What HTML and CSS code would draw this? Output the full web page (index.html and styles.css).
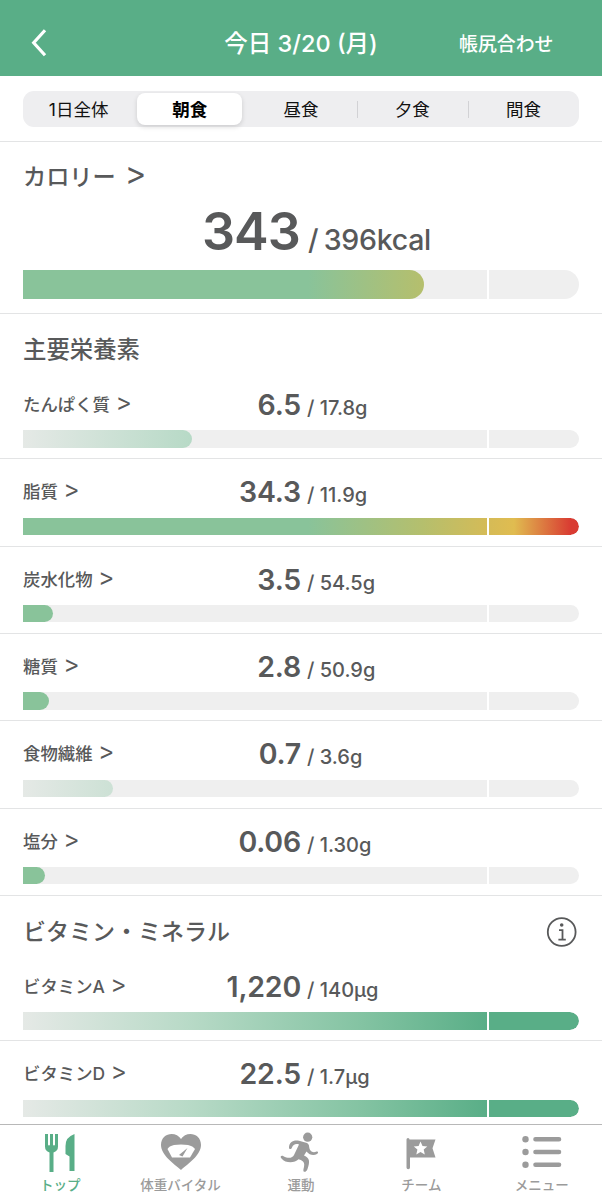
FILE: index.html
```
<!DOCTYPE html>
<html lang="ja">
<head>
<meta charset="utf-8">
<title>今日 3/20 (月)</title>
<link rel="stylesheet" href="styles.css">
</head>
<body>
<div class="app">
  <header class="header">
    <svg class="back" width="18" height="30" viewBox="0 0 18 30"><path d="M15 2.300 3.700 14.800 15 27.300" fill="none" stroke="#fff" stroke-width="3.200"/></svg>
    <h1 class="title">今日 3/20 (月)</h1>
    <span class="adjust">帳尻合わせ</span>
  </header>
  <div class="segment-wrap">
    <nav class="segments">
      <span class="segment">1日全体</span>
      <span class="segment active">朝食</span>
      <span class="segment">昼食</span>
      <span class="segment divided">夕食</span>
      <span class="segment divided">間食</span>
    </nav>
  </div>
  <main class="content">
    <section class="calories">
      <h2 class="calories-label">カロリー <span class="gt">&gt;</span></h2>
      <div class="calories-value"><span class="total">343</span><span class="goal">/ 396kcal</span></div>
      <div class="bar large"><div class="fill heat" style="width:401px"></div><i class="tick"></i></div>
    </section>
    <section>
      <h2 class="heading">主要栄養素</h2>
      <div class="row"><div class="info"><span class="label">たんぱく質 <span class="gt">&gt;</span></span><b class="num">6.5</b><span class="target">/ 17.8g</span></div><div class="bar"><div class="fill good" style="width:169px"></div><i class="tick"></i></div></div>
      <div class="row"><div class="info"><span class="label">脂質 <span class="gt">&gt;</span></span><b class="num">34.3</b><span class="target">/ 11.9g</span></div><div class="bar"><div class="fill heat" style="width:556px"></div><i class="tick"></i></div></div>
      <div class="row"><div class="info"><span class="label">炭水化物 <span class="gt">&gt;</span></span><b class="num">3.5</b><span class="target">/ 54.5g</span></div><div class="bar"><div class="fill heat" style="width:30px"></div><i class="tick"></i></div></div>
      <div class="row"><div class="info"><span class="label">糖質 <span class="gt">&gt;</span></span><b class="num">2.8</b><span class="target">/ 50.9g</span></div><div class="bar"><div class="fill heat" style="width:26px"></div><i class="tick"></i></div></div>
      <div class="row"><div class="info"><span class="label">食物繊維 <span class="gt">&gt;</span></span><b class="num">0.7</b><span class="target">/ 3.6g</span></div><div class="bar"><div class="fill good" style="width:90px"></div><i class="tick"></i></div></div>
      <div class="row"><div class="info"><span class="label">塩分 <span class="gt">&gt;</span></span><b class="num">0.06</b><span class="target">/ 1.30g</span></div><div class="bar"><div class="fill heat" style="width:21.5px"></div><i class="tick"></i></div></div>
    </section>
    <section>
      <h2 class="heading kana">ビタミン・ミネラル
        <svg width="32" height="32" viewBox="0 0 32 32" fill="none" stroke="#58595a"><circle cx="15.700" cy="16" r="13.900" stroke-width="1.800"/><path d="M13 14.100h3.500v9.300M12.400 23.600h7.400" stroke-width="1.800"/><circle cx="15.700" cy="9" r="1.800" fill="#58595a" stroke="none"/></svg>
      </h2>
      <div class="row"><div class="info"><span class="label">ビタミンA <span class="gt">&gt;</span></span><b class="num">1,220</b><span class="target">/ 140μg</span></div><div class="bar"><div class="fill good" style="width:556px"></div><i class="tick"></i></div></div>
      <div class="row"><div class="info"><span class="label">ビタミンD <span class="gt">&gt;</span></span><b class="num">22.5</b><span class="target">/ 1.7μg</span></div><div class="bar"><div class="fill good" style="width:556px"></div><i class="tick"></i></div></div>
    </section>
  </main>
  <nav class="tabs">
    <div class="tab current">
      <svg width="44" height="44" viewBox="0 0 44 44" fill="currentColor"><path d="M7 4h3v10.500a1 1 0 0 0 2 0V4h3v10.500a1 1 0 0 0 2 0V4h3v12.500q0 4.500-4.500 6V42h-4V22.500Q7 21 7 16.500ZM36.500 4v37h-5V26.500l-4-2.500V16q0-9 9-12Z"/></svg>
      <span>トップ</span>
    </div>
    <div class="tab">
      <svg width="44" height="44" viewBox="0 0 44 44" fill="currentColor"><path d="M22 9C26.500 1 42 2 42 15C42 25 29 34 22 40C15 34 2 25 2 15C2 2 17.500 1 22 9Z"/><path d="M8.500 19Q10 16 15 15Q22 14 29 15Q34 16 36 19L31 27.500H13Z" fill="#fff"/><path d="m28.500 18-8.500 7 3.500 1.500Z"/></svg>
      <span>体重バイタル</span>
    </div>
    <div class="tab">
      <svg width="44" height="44" viewBox="0 0 44 44" fill="currentColor"><circle cx="28.700" cy="7.200" r="4.600"/><path d="M10 17.500C10 12 15 9.500 20 10.800L28 13C31 14.500 29.500 18 31.500 20.500C33 22.500 35.500 22.500 37.500 21.500C39.500 21 39.500 23 38 24C34.500 26.200 30.500 25 27.500 21.500L25 25.500C31 28 31 32 28.500 39C27.500 42.500 23.500 43 24.500 39C25.500 35 26.500 31 19.500 29.300C15.500 33.500 6.500 33.500 2.500 28.500C.500 26.500 2.500 25 4.500 26.300C9.500 29 13.500 28 15 25L20 14.500C16.500 13.200 14 15 13 17.500C12.200 19.700 10 19.500 10 17.500Z"/></svg>
      <span>運動</span>
    </div>
    <div class="tab">
      <svg width="44" height="44" viewBox="0 0 44 44" fill="currentColor"><path d="M7.500 9.500a1.500 1.500 0 0 1 3 0H36.500l-3 8.700 3 9.300H11v10a1.700 1.700 0 0 1-3.500 0Z"/><path d="m21.500 11.500 2 4.400 4.800.5-3.600 3.200 1.100 4.800-4.300-2.500-4.200 2.500 1.100-4.800-3.600-3.200 4.800-.5Z" fill="#fff"/></svg>
      <span>チーム</span>
    </div>
    <div class="tab">
      <svg width="44" height="44" viewBox="0 0 44 44" fill="currentColor"><circle cx="5.500" cy="9.200" r="3.200"/><circle cx="5.500" cy="22" r="3.200"/><circle cx="5.500" cy="34.700" r="3.200"/><path d="M15.500 9.200h23.500M15.500 22h23.500M15.500 34.700h23.500" stroke="currentColor" stroke-width="4.600" stroke-linecap="round"/></svg>
      <span>メニュー</span>
    </div>
  </nav>
</div>
</body>
</html>
```
FILE: styles.css
```
* { box-sizing: border-box; }
body {
  margin: 0;
  background: #fff;
  color: #58595a;
  font-family: Inter, "Noto Sans CJK JP", sans-serif;
}
.app { display: flex; flex-direction: column; width: 602px; height: 1200px; overflow: hidden; }
h1, h2 { margin: 0; }

.header {
  display: grid;
  grid-template-columns: 140px 1fr 150px;
  align-items: center;
  flex: none;
  height: 75.500px;
  padding: 11px 0 0 30px;
  background: #59ae87;
  color: #fff;
}
.title { padding-top: 2px; margin-left: -20px; font-size: 23.500px; font-weight: 500; line-height: 30px; text-align: center; white-space: nowrap; }
.adjust { padding: 3px 0 0 7px; font-size: 18.900px; font-weight: 500; line-height: 28px; white-space: nowrap; }

.segment-wrap { flex: none; height: 66.500px; padding: 15.500px 23px 0; border-bottom: 1px solid #e3e4e5; }
.segments { display: grid; grid-template-columns: repeat(5, 1fr); height: 36px; padding: 2px 0; border-radius: 11px; background: #eeeef0; }
.segment {
  display: flex;
  align-items: center;
  justify-content: center;
  padding-top: 1px;
  color: #111;
  font-size: 17.500px;
  line-height: 31px;
}
.active { margin: 0 3px 0 3px; border-radius: 8px; background: #fff; box-shadow: 0 2px 5px rgba(0, 0, 0, .14); color: #000; font-weight: 700; }
.divided { background: linear-gradient(#d2d2d5, #d2d2d5) 0 50% / 1px 17px no-repeat; }

.content { flex: 1; min-height: 0; overflow: hidden; }
.calories { height: 172px; padding: 14px 23px 0; border-bottom: 1px solid #e3e4e5; }
.calories-label { height: 38px; font-family: "Noto Sans CJK JP", sans-serif; font-size: 23.200px; font-weight: 500; line-height: 34px; white-space: nowrap; }
.calories-value { display: grid; grid-template-columns: 277px 1fr; column-gap: 8px; align-items: baseline; height: 76px; font-weight: 600; line-height: 76px; }
.total { font-size: 52px; letter-spacing: -.9px; text-align: right; }
.goal { font-size: 28.500px; font-weight: 500; letter-spacing: -.25px; word-spacing: -2px; }
.gt {
  display: inline-block;
  margin-left: .12em;
  font-family: "Noto Sans CJK JP", sans-serif;
  font-size: 1.350em;
  font-weight: 400;
  line-height: 1;
  transform: translateY(.08em) scaleY(1.2);
  transform-origin: 50% 62%;
}
.calories-label .gt { margin-left: .2em; }

.heading { display: flex; align-items: center; justify-content: space-between; height: 58px; padding: 14px 24px 0 23px; font-size: 23.400px; font-weight: 500; line-height: 34px; }
.kana { font-size: 23px; }
.row { height: 87.350px; padding: 0 23px; border-bottom: 1px solid #e3e4e5; }
.info { display: grid; grid-template-columns: 160px 118px 1fr; align-items: start; height: 58.300px; padding-top: 9px; line-height: 48px; white-space: nowrap; }
.label { height: 48px; font-size: 17.400px; font-weight: 500; }
.num { font-size: 28.500px; font-weight: 600; letter-spacing: -.2px; text-align: right; }
.target { padding: 3px 0 0 6px; font-size: 20px; font-weight: 500; }

.bar { position: relative; height: 17.300px; border-radius: 0 9px 9px 0; background: #efefef; overflow: hidden; }
.large { height: 29px; border-radius: 0 15px 15px 0; }
.fill { height: 100%; border-radius: 0 15px 15px 0; background-size: 556px 100%; background-repeat: no-repeat; }
.heat { background-image: linear-gradient(90deg, #89c39a 0, #89c39a 285px, #b5bf6d 400px, #d5bb57 465px, #e0bc50 491px, #d93b32 548px); }
.good { background-image: linear-gradient(90deg, #e5e9e6 0, #b8dac7 165px, #83c3a2 340px, #59ae87 465px); }
.tick { position: absolute; left: 463.500px; top: 0; width: 2px; height: 100%; background: #fff; }

.tabs { display: grid; grid-template-columns: repeat(5, 1fr); flex: none; height: 76px; border-top: 1px solid #b8b8b8; background: #fff; }
.tab { display: flex; flex-direction: column; align-items: center; gap: 1px; padding-top: 5px; color: #9b9b9b; font-size: 13.500px; font-weight: 500; line-height: 20px; white-space: nowrap; }
.current { color: #59ae87; }
```
